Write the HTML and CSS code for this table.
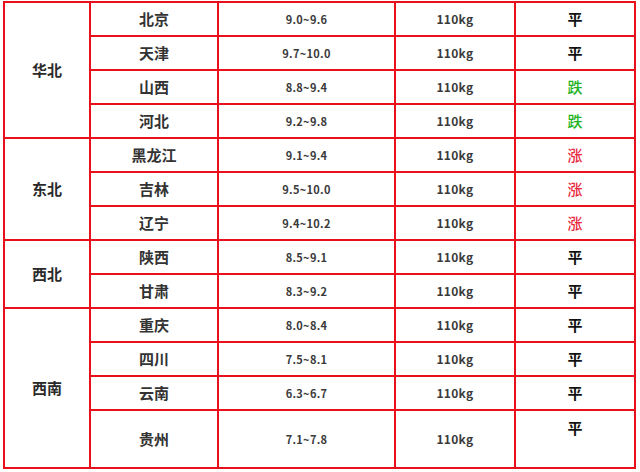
FILE: index.html
```html
<!DOCTYPE html>
<html lang="zh">
<head>
<meta charset="utf-8">
<link rel="stylesheet" href="styles.css">
</head>
<body>
<table class="price-table">
  <colgroup>
    <col class="c-region"><col class="c-city"><col class="c-price"><col class="c-weight"><col class="c-trend">
  </colgroup>
  <tbody>
    <tr><td class="region" rowspan="4">华北</td><td class="city">北京</td><td class="price">9.0~9.6</td><td class="weight">110kg</td><td class="trend flat">平</td></tr>
    <tr><td class="city">天津</td><td class="price">9.7~10.0</td><td class="weight">110kg</td><td class="trend flat">平</td></tr>
    <tr><td class="city">山西</td><td class="price">8.8~9.4</td><td class="weight">110kg</td><td class="trend down">跌</td></tr>
    <tr><td class="city">河北</td><td class="price">9.2~9.8</td><td class="weight">110kg</td><td class="trend down">跌</td></tr>
    <tr><td class="region" rowspan="3">东北</td><td class="city">黑龙江</td><td class="price">9.1~9.4</td><td class="weight">110kg</td><td class="trend up">涨</td></tr>
    <tr><td class="city">吉林</td><td class="price">9.5~10.0</td><td class="weight">110kg</td><td class="trend up">涨</td></tr>
    <tr><td class="city">辽宁</td><td class="price">9.4~10.2</td><td class="weight">110kg</td><td class="trend up">涨</td></tr>
    <tr><td class="region" rowspan="2">西北</td><td class="city">陕西</td><td class="price">8.5~9.1</td><td class="weight">110kg</td><td class="trend flat">平</td></tr>
    <tr><td class="city">甘肃</td><td class="price">8.3~9.2</td><td class="weight">110kg</td><td class="trend flat">平</td></tr>
    <tr><td class="region" rowspan="4">西南</td><td class="city">重庆</td><td class="price">8.0~8.4</td><td class="weight">110kg</td><td class="trend flat">平</td></tr>
    <tr><td class="city">四川</td><td class="price">7.5~8.1</td><td class="weight">110kg</td><td class="trend flat">平</td></tr>
    <tr><td class="city">云南</td><td class="price">6.3~6.7</td><td class="weight">110kg</td><td class="trend flat">平</td></tr>
    <tr class="tall"><td class="city">贵州</td><td class="price">7.1~7.8</td><td class="weight">110kg</td><td class="trend flat raised">平</td></tr>
  </tbody>
</table>
</body>
</html>
```
FILE: styles.css
```css
html, body {
  margin: 0;
  padding: 0;
  background: #ffffff;
}

body {
  padding: 1px 0 0 3px;
  font-family: "Noto Sans CJK SC", "Noto Sans", sans-serif;
  color: #333333;
}

.price-table {
  border-collapse: collapse;
  table-layout: fixed;
  width: 633px;
}

.c-region { width: 86px; }
.c-city { width: 128px; }
.c-price { width: 177px; }
.c-weight { width: 120px; }
.c-trend { width: 120px; }

.price-table td {
  border: 2px solid #e8101a;
  text-align: center;
  vertical-align: middle;
  padding: 0;
  line-height: 20px;
}

.price-table tr {
  height: 34px;
}

.price-table tr.tall {
  height: 58px;
}

.region {
  font-size: 15px;
  font-weight: 700;
  color: #2a2a2a;
}

.city {
  font-size: 15px;
  font-weight: 700;
  color: #333333;
}

.price {
  font-size: 11px;
  font-weight: 700;
  color: #3a3a3a;
  letter-spacing: 0.3px;
}

.weight {
  font-size: 12px;
  font-weight: 700;
  color: #3a3a3a;
  letter-spacing: 0.3px;
}

.trend {
  font-size: 15px;
}

.trend.flat {
  font-weight: 700;
  color: #111111;
}

.trend.down {
  font-weight: 500;
  color: #1fb41f;
}

.trend.up {
  font-weight: 500;
  color: #e8283c;
}

.trend.raised {
  padding-bottom: 22px;
}
```
